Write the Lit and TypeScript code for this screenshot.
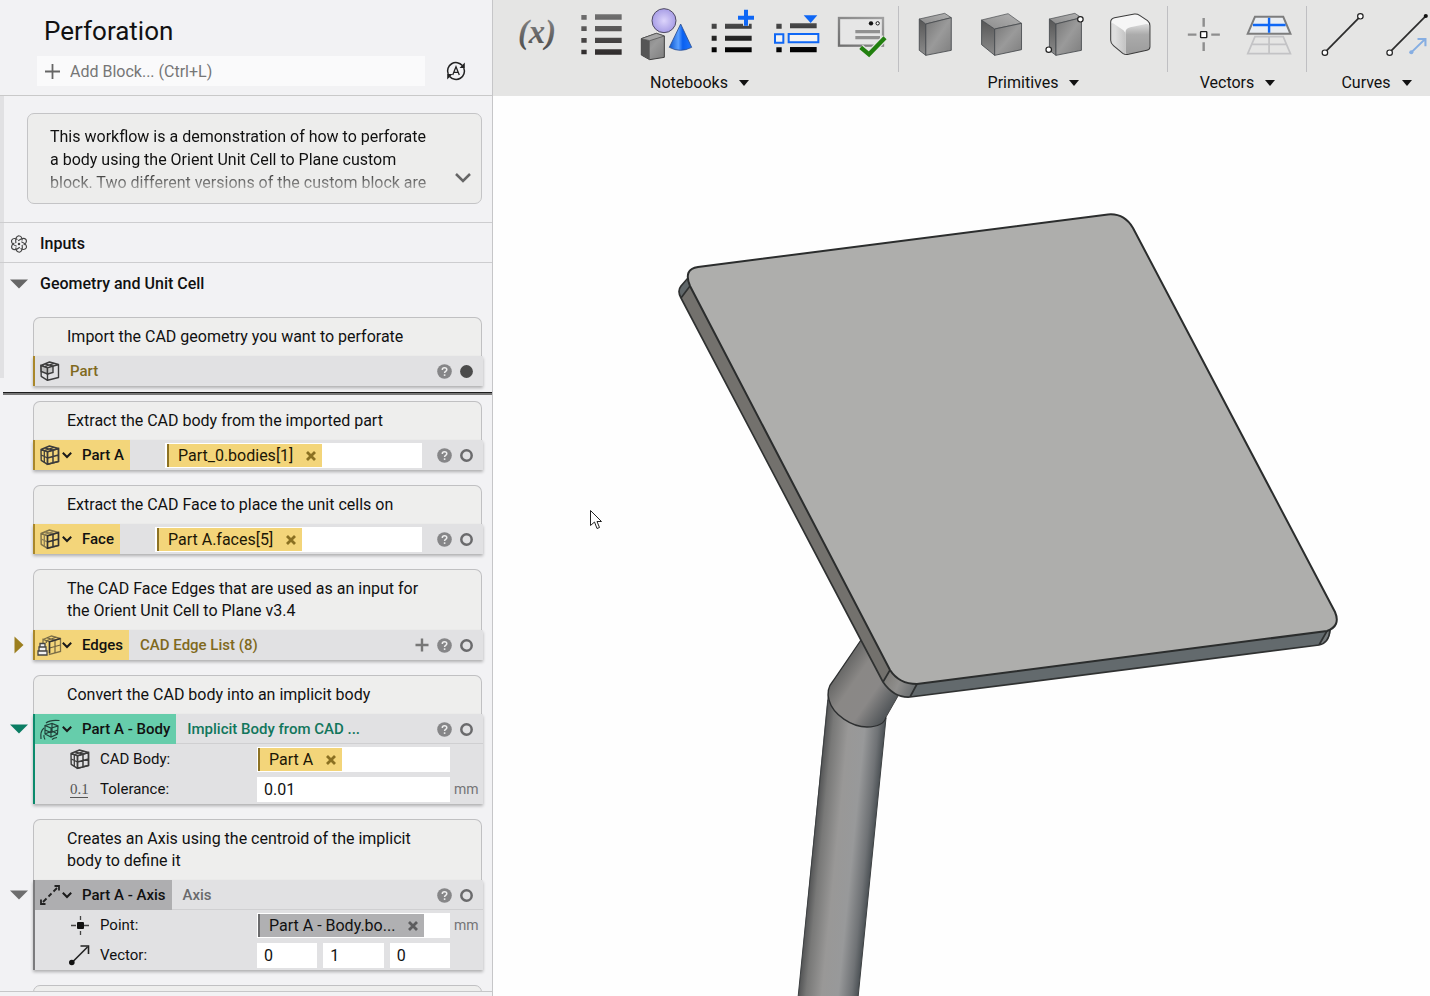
import { LitElement, html, svg, css, nothing } from "lit";
import { customElement } from "lit/decorators.js";

/* ---------- small icons for the block list ---------- */

const CUBE_OUTLINE = "M1 4.5 9.500 1 18.5 3.500 18.5 16.500 7.500 19.300 1.2 15.300ZM1 4.5 7.500 6.8 18.5 3.500M7.500 6.8V19.300";

const icon = (body: unknown, w = 20, h = 20, box = `0 0 ${w} ${h}`) =>
  html`<svg class="ico" width=${w} height=${h} viewBox=${box} aria-hidden="true">${body}</svg>`;

const partIcon = icon(svg`
  <path d=${CUBE_OUTLINE} fill="none" stroke="#3c3c3c" stroke-width="1.4" stroke-linejoin="round"/>
  <path d="M1 4.5 7.500 6.8V13L1.2 10.5Z" fill="#bdbdbd" stroke="#3c3c3c" stroke-width="1.4"/>
  <path d="M7.500 6.8 13 5.200V11.500L7.500 13Z" fill="#c9c9c9" stroke="#3c3c3c" stroke-width="1.4"/>
  <path d="M5 2.800 13 5.200M4.500 5.700 14 2.3" stroke="#3c3c3c" stroke-width="1.3" fill="none"/>`);

const meshIcon = (line: string, inner: string, front: string) => icon(svg`
  <path d=${CUBE_OUTLINE} fill="none" stroke=${line} stroke-width="1.4" stroke-linejoin="round"/>
  <path d="M1.2 10 7.500 13M4.3 5.700V17.300M5 2.800 13 5.200M4.3 5.700 14 2.3" fill="none" stroke=${inner} stroke-width="1.3"/>
  <path d="M7.500 6.8 18.5 3.500V16.500L7.500 19.300ZM13 5.200V17.900M7.500 13 18.5 10" fill="none" stroke=${front} stroke-width="1.5"/>`);

const bodyIcon = meshIcon("#3c3c3c", "#3c3c3c", "#3c3c3c");
const faceIcon = meshIcon("#7d7048", "#8b7d55", "#333");

const edgesIcon = icon(svg`
  <g transform="translate(2 0)">
    <path d="M1 4.5 9.500 1 18.5 3.500V16.500L7.500 19.300V6.8L1 4.5V8M7.500 6.8 18.5 3.500" fill="none" stroke="#7d7048" stroke-width="1.3"/>
    <path d="M13 5.200V17.900M7.500 13 18.5 10M5 2.800 13 5.200M4.3 5.700 14 2.3M4.3 5.700V8" fill="none" stroke="#6d6140" stroke-width="1.2"/>
    <path d="M7.500 18V6.8L18.5 3.500" fill="none" stroke="#333" stroke-width="1.5"/>
  </g>
  <path d="M0 8.5H5V12H0ZM-1 12H6V15.8H-1ZM-2 16H7V20H-2Z" fill="#f0f0f0" stroke="#444" stroke-width="1.3"/>`);

const implicitIcon = icon(svg`
  <path d="M5 6.5 12 4.5 18 7 17.5 15 11 18 5 15ZM5 6.5 11 9 18 7M11 9V18M5 11 11 13.5 17.8 11M5 15 12 12 17.5 15M12 4.5V12"
    fill="none" stroke="#22413a" stroke-width="1.2"/>
  <path d="M6 4Q10 .5 19.5 1.5M1 20Q0 12 4 9M5 20.5Q3.5 18 4 16M12 20.5Q13.5 19 17 18.5" fill="none" stroke="#22413a" stroke-width="1.2"/>`);

const axisIcon = icon(svg`
  <path d="M3 17 6.500 13.500M8.500 11.500 11.500 8.500M13.500 6.500 17 3" stroke="#222" stroke-width="1.800" fill="none"/>
  <path d="M1 14.500V19H5.500M14.500 1H19V5.500" fill="none" stroke="#222" stroke-width="1.800"/>`);

const pointIcon = icon(svg`
  <path d="M1 10.500H6M14 10.500H19M10.500 1V5M10.500 16V20" stroke="#444" stroke-width="1.3"/>
  <rect x="7" y="7" width="7" height="7" rx="1" fill="#111"/>`);

const vectorIcon = icon(svg`
  <path d="M1.500 18 17.500 2" stroke="#222" stroke-width="1.6"/>
  <path d="M10.500 1H18.500V9" fill="none" stroke="#222" stroke-width="1.6"/>
  <circle cx="1.800" cy="17.500" r="2.800" fill="#111"/>`);

const numberIcon = html`<span class="num-ico" aria-hidden="true">0.1</span>`;

const chevron = (w: number, color: string, sw: number) => html`
  <svg width=${w} height=${w} viewBox="0 0 10 10" aria-hidden="true">
    <path d="M.8 2.800 5 7 9.200 2.800" fill="none" stroke=${color} stroke-width=${sw}/>
  </svg>`;

const triDown = (color: string) => html`
  <svg width="18" height="10" viewBox="0 0 18 10" aria-hidden="true"><path d="M0 .5H18L9 9.500Z" fill=${color}/></svg>`;
const triRight = (color: string) => html`
  <svg width="18" height="18" viewBox="0 0 18 18" aria-hidden="true"><path d="M4.500 .5V17.500L13.500 9Z" fill=${color}/></svg>`;

/* ---------- block data ---------- */

type Tone = "gold" | "teal" | "grey";
interface Param {
  icon: unknown;
  label: string;
  chip?: { text: string; tone: Tone };
  values?: string[];
  unit?: string;
}
interface Block {
  comment: string;
  tone: Tone;
  icon: unknown;
  tag?: string;
  type?: string;
  chip?: string;
  addable?: boolean;
  visible?: boolean;
  toggle?: "open" | "closed";
  marker?: boolean;
  params?: Param[];
}

const BLOCKS: Block[] = [
  { comment: "Import the CAD geometry you want to perforate", tone: "gold", icon: partIcon, type: "Part", visible: true, marker: true },
  { comment: "Extract the CAD body from the imported part", tone: "gold", icon: bodyIcon, tag: "Part A", chip: "Part_0.bodies[1]" },
  { comment: "Extract the CAD Face to place the unit cells on", tone: "gold", icon: faceIcon, tag: "Face", chip: "Part A.faces[5]" },
  {
    comment: "The CAD Face Edges that are used as an input for the Orient Unit Cell to Plane v3.4",
    tone: "gold", icon: edgesIcon, tag: "Edges", type: "CAD Edge List (8)", addable: true, toggle: "closed",
  },
  {
    comment: "Convert the CAD body into an implicit body",
    tone: "teal", icon: implicitIcon, tag: "Part A - Body", type: "Implicit Body from CAD ...", toggle: "open",
    params: [
      { icon: bodyIcon, label: "CAD Body:", chip: { text: "Part A", tone: "gold" } },
      { icon: numberIcon, label: "Tolerance:", values: ["0.01"], unit: "mm" },
    ],
  },
  {
    comment: "Creates an Axis using the centroid of the implicit body to define it",
    tone: "grey", icon: axisIcon, tag: "Part A - Axis", type: "Axis", toggle: "open",
    params: [
      { icon: pointIcon, label: "Point:", chip: { text: "Part A - Body.bo...", tone: "grey" }, unit: "mm" },
      { icon: vectorIcon, label: "Vector:", values: ["0", "1", "0"] },
    ],
  },
];

const TOGGLE_COLOR: Record<Tone, string> = { gold: "#9c7f1f", teal: "#0b7d63", grey: "#6e6e6e" };

@customElement("block-card")
class BlockCard extends LitElement {
  static properties = { block: { attribute: false } };
  declare block: Block;

  static styles = css`
    :host { display: grid; grid-template-columns: 33px 1fr; padding-right: 9px; }
    * { box-sizing: border-box; }
    button { border: 0; background: none; padding: 0; margin: 0; font: inherit; color: inherit; display: flex; align-items: center; }
    svg { display: block; flex: none; }
    .comment {
      grid-column: 2; margin: 0 1px 0 0; padding: 8px 48px 8px 33px; line-height: 22px;
      background: #eeeeed; border: 1px solid #c0c0c2; border-bottom: 0; border-radius: 7px 7px 0 0;
    }
    .toggle { grid-column: 1; grid-row: 2; height: 30px; width: 28px; padding-left: 10px; }
    .block { grid-column: 2; grid-row: 2; background: #e1e1e3; border-left: 2px solid; box-shadow: 0 2px 3px rgba(0, 0, 0, 0.28); }
    .block.gold { border-color: #a9872a; }
    .block.teal { border-color: #0b8a6c; }
    .block.grey { border-color: #7b7b7d; }
    .head { display: flex; align-items: center; height: 30px; }
    .tag { height: 30px; padding: 0 6px 0 5px; font-size: 15px; font-weight: 500; gap: 10px; }
    .tag .pair { display: flex; align-items: center; gap: 2px; width: 32px; }
    .ico { overflow: visible; }
    .gold .tag { background: #f3d57a; }
    .teal .tag { background: #66cdab; }
    .grey .tag { background: #aeaeb0; }
    .plain { display: flex; align-items: center; gap: 10px; padding-left: 5px; }
    .type { font-size: 15px; font-weight: 500; }
    .tag + .type { padding-left: 11px; }
    .gold .type { color: #80691d; }
    .teal .type { color: #12765c; }
    .grey .type { color: #6a6a6c; }
    .tools { margin-left: auto; display: flex; align-items: center; gap: 8px; padding-right: 10px; }
    .slot { flex: 1; margin: 0 15px 0 35px; padding-left: 2px; }
    .slot, .field { display: flex; align-items: center; height: 25px; background: #fff; min-width: 0; }
    .field { padding-left: 1px; }
    .slot input, .field input { flex: 1; width: 0; min-width: 0; height: 100%; }
    input { border: 0; outline: 0; background: #fff; font: inherit; color: #111; padding: 0 7px; margin: 0; border-radius: 0; }
    .chip { display: flex; align-items: center; gap: 13px; height: 23px; padding: 1px 6px 0 9px; border-left: 2px solid; white-space: nowrap; }
    .chip.gold { background: #f3d57a; border-color: #8d7223; color: #1c1705; }
    .chip.grey { background: #b0b0b2; border-color: #6b6b6d; }
    .param { display: grid; grid-template-columns: 30px 1fr 193px 33px; align-items: center; height: 30px; padding-left: 35px; }
    .param label { font-size: 15px; }
    .values { display: flex; gap: 6px; }
    .values input { flex: 1; width: 0; min-width: 0; height: 25px; }
    .unit { color: #747476; padding-left: 4px; font-size: 14px; }
    .num-ico { display: block; width: 18px; height: 17px; font: 15px/16px "Liberation Serif", serif; color: #555; border-bottom: 1px solid #555; }
    .rule { height: 1px; background: #cfcfd1; margin-top: -1px; }
  `;

  private cross(tone: Tone) {
    return html`<button aria-label="Remove">
      <svg width="10" height="10" viewBox="0 0 10 10"><path d="M1 1 9 9M9 1 1 9" stroke=${tone === "grey" ? "#5c5c5e" : "#8a7022"} stroke-width="2.800"/></svg>
    </button>`;
  }

  private param(p: Param, i: number) {
    const id = `p${i}`;
    return html`<div class="param">
      ${p.icon}<label for=${id}>${p.label}</label>
      ${p.chip
        ? html`<div class="field"><span class="chip ${p.chip.tone}">${p.chip.text}${this.cross(p.chip.tone)}</span><input id=${id} /></div>`
        : html`<div class="values">${p.values!.map((v, k) => html`<input id=${k ? `${id}-${k}` : id} aria-label=${p.label} .value=${v} />`)}</div>`}
      <span class="unit">${p.unit ?? nothing}</span>
    </div>`;
  }

  render() {
    const b = this.block;
    return html`
      <p class="comment">${b.comment}</p>
      ${b.toggle
        ? html`<button class="toggle" aria-label="Toggle block">${b.toggle === "open" ? triDown(TOGGLE_COLOR[b.tone]) : triRight(TOGGLE_COLOR[b.tone])}</button>`
        : nothing}
      <div class="block ${b.tone}">
        <div class="head">
          ${b.tag
            ? html`<button class="tag"><span class="pair">${b.icon}${chevron(10, "#1a1a1a", 2)}</span>${b.tag}</button>
                ${b.type ? html`<span class="type">${b.type}</span>` : nothing}`
            : html`<span class="plain">${b.icon}<span class="type">${b.type}</span></span>`}
          ${b.chip
            ? html`<div class="slot"><span class="chip gold">${b.chip}${this.cross("gold")}</span><input aria-label=${`${b.tag} value`} /></div>`
            : nothing}
          <div class="tools">
            ${b.addable
              ? html`<button aria-label="Add"><svg width="14" height="14" viewBox="0 0 14 14"><path d="M7 .5V13.500M.5 7H13.500" stroke="#777" stroke-width="2.400"/></svg></button>`
              : nothing}
            <button aria-label="Help"><svg width="15" height="15" viewBox="0 0 15 15">
              <circle cx="7.500" cy="7.500" r="7.300" fill="#868688"/>
              <path d="M5.300 5.900Q5.300 3.800 7.500 3.800 9.800 3.800 9.800 5.700 9.800 6.700 8.600 7.400 7.600 8 7.600 9.100" fill="none" stroke="#eee" stroke-width="1.500"/>
              <rect x="6.800" y="10.300" width="1.600" height="1.600" fill="#eee"/></svg></button>
            <button aria-label="Visibility"><svg width="13" height="13" viewBox="0 0 13 13">
              ${b.visible
                ? svg`<circle cx="6.500" cy="6.500" r="6.400" fill="#4b4b4b"/>`
                : svg`<circle cx="6.500" cy="6.500" r="5.200" fill="none" stroke="#6a6a6c" stroke-width="2.500"/>`}</svg></button>
          </div>
        </div>
        ${b.params ? html`<div class="rule"></div>${b.params.map((p, i) => this.param(p, i))}` : nothing}
      </div>`;
  }
}

/* ---------- ribbon ---------- */

interface Tool { name: string; art: unknown }
interface Group { name: string; box: (i: number) => string; tools: Tool[] }

const gradients = svg`<defs>
  <linearGradient id="bars" gradientUnits="userSpaceOnUse" x1="0" y1="40" x2="0" y2="165"><stop offset="0" stop-color="#727272"/><stop offset="1" stop-color="#2e2a2a"/></linearGradient>
  <linearGradient id="dark" gradientUnits="userSpaceOnUse" x1="0" y1="65" x2="0" y2="155"><stop offset="0" stop-color="#505050"/><stop offset="1" stop-color="#000"/></linearGradient>
  <linearGradient id="fx" x1="0" y1="0" x2="0" y2="1"><stop offset="0" stop-color="#8a8a8a"/><stop offset="1" stop-color="#4a4a4a"/></linearGradient>
  <radialGradient id="ball"><stop offset="0" stop-color="#dcd4fb"/><stop offset="1" stop-color="#a89ee6"/></radialGradient>
  <linearGradient id="cone" x1="0" x2="1"><stop offset="0" stop-color="#0a55d0"/><stop offset=".4" stop-color="#5aa0ff"/><stop offset=".6" stop-color="#0a60f0"/><stop offset="1" stop-color="#1f77ff"/></linearGradient>
  <linearGradient id="face" x1="0" y1="0" x2="1" y2="1"><stop offset="0" stop-color="#767676"/><stop offset=".5" stop-color="#9a9a9a"/><stop offset="1" stop-color="#7e7e7e"/></linearGradient>
  <linearGradient id="side" x1="0" y1="0" x2="0" y2="1"><stop offset="0" stop-color="#565656"/><stop offset="1" stop-color="#8c8c8c"/></linearGradient>
  <linearGradient id="top" x1="0" y1="1" x2="1" y2="0"><stop offset="0" stop-color="#8c8c8c"/><stop offset="1" stop-color="#b2b2b2"/></linearGradient>
  <linearGradient id="soft" x1="0" y1="0" x2="0" y2="1"><stop offset="0" stop-color="#dcdcdc"/><stop offset=".35" stop-color="#ababab"/><stop offset="1" stop-color="#9c9c9c"/></linearGradient>
  <linearGradient id="softside" x1="0" y1="0" x2="1" y2="0"><stop offset=".3" stop-color="#dedede"/><stop offset="1" stop-color="#c4c4c4"/></linearGradient>
  <linearGradient id="panel" x1="0" y1="1" x2="1" y2="0"><stop offset="0" stop-color="#707070"/><stop offset="1" stop-color="#a0a0a0"/></linearGradient>
</defs>`;

const box3d = (x: number) => svg`<g transform="translate(${x} 0)" stroke="#45484c" stroke-width="2.500" stroke-linejoin="round">
  <path d="M85 57 104 72V166L85 151Z" fill="url(#side)"/>
  <path d="M85 57 159 40 178 53 104 72Z" fill="url(#top)" stroke-width="2"/>
  <path d="M104 72 178 53V151L104 166Z" fill="url(#face)"/></g>`;

const knob = (x: number, y: number) => svg`<circle cx=${x} cy=${y} r="8" fill="#fff" stroke="#222" stroke-width="3.500"/>`;

const ROUNDED = "M652 53 710 42Q718 41 725 46L748 62Q755 68 755 77V140Q755 149 746 151L693 163Q683 165 676 160L649 137Q641 131 641 121V66Q641 56 652 53Z";

const GROUPS: Group[] = [
  {
    name: "Notebooks",
    box: (i) => `${33 + 195 * i} 24 195 162`,
    tools: [
      { name: "Variable", art: svg`<text x="132" y="130" text-anchor="middle" font-family="Liberation Serif, serif" font-style="italic" font-weight="700" font-size="98" fill="url(#fx)">(x)</text>` },
      { name: "List", art: svg`<g fill="url(#bars)">
          <path d="M265 45h16v14h-16zM265 79h16v14h-16zM265 114h16v14h-16zM265 149h16v14h-16zM306 43h80v16h-80zM306 78h80v16h-80zM306 113h80v16h-80zM306 148h80v16h-80z"/></g>` },
      { name: "Custom block", art: svg`
          <path d="M445 116 490 100 514 108 514 172 470 179 445 165Z" fill="url(#face)" stroke="#3e3e3e" stroke-width="3" stroke-linejoin="round"/>
          <path d="M445 116 470 122 470 179 445 165Z" fill="#555"/><path d="M445 116 490 100 514 108 470 122Z" fill="#a6a6a6" stroke="#4a4a4a" stroke-width="2"/>
          <circle cx="513" cy="62" r="36" fill="url(#ball)" stroke="#4e4a62" stroke-width="3"/>
          <path d="M563 72 529 142Q562 160 596 142Z" fill="url(#cone)" stroke="#2c4f92" stroke-width="2.500"/>` },
      { name: "Add to list", art: svg`<path d="M656 71h15v15h-15zM656 107h15v15h-15zM656 142h15v15h-15zM696 71h80v15h-80zM696 107h80v15h-80zM696 142h80v15h-80z" fill="url(#dark)"/>
          <path d="M759 29V77M735 53H783" stroke="#e5e5e4" stroke-width="18"/><path d="M759 29V77M735 53H783" stroke="#0f67f5" stroke-width="12"/>` },
      { name: "Insert row", art: svg`<path d="M850 71h16v15h-16zM850 142h16v15h-16zM891 70h80v15h-80zM891 141h80v16h-80z" fill="url(#dark)"/>
          <path d="M932 46H973L953 69Z" fill="#0f67f5"/><path d="M846 103h25v25h-25zM887 102h89v25h-89z" fill="#f3f3f3" stroke="#0f67f5" stroke-width="6"/>` },
      { name: "Check notebook", art: svg`<rect x="1038" y="54" width="132" height="83" fill="#e6e6e6" stroke="url(#panel)" stroke-width="7"/>
          <path d="M1087 95h74M1087 113h74" stroke="#919191" stroke-width="10"/>
          <circle cx="1134" cy="70" r="6.500" fill="#111"/><circle cx="1154" cy="70" r="5" fill="#fff" stroke="#111" stroke-width="3"/>
          <path d="M1103 142 1128 163 1176 113" fill="none" stroke="#e5e5e4" stroke-width="20"/><path d="M1103 142 1128 163 1176 113" fill="none" stroke="#22800f" stroke-width="13"/>` },
    ],
  },
  {
    name: "Primitives",
    box: (i) => `${37.75 + 188.8 * i} 24 188.8 162`,
    tools: [
      { name: "Box", art: box3d(0) },
      { name: "Cube", art: svg`<g stroke="#45484c" stroke-width="2.500" stroke-linejoin="round">
          <path d="M266 60 304 87V166L266 134Z" fill="url(#side)"/><path d="M266 60 343 41 382 70 304 87Z" fill="url(#top)" stroke-width="2"/><path d="M304 87 382 70V149L304 166Z" fill="url(#face)"/></g>` },
      { name: "Box from corners", art: svg`${box3d(378)}${knob(553, 58)}${knob(461, 149)}` },
      { name: "Rounded box", art: svg`<path d=${ROUNDED} fill="#f6f6f6"/>
          <path d="M684 98Q684 85 698 82L744 72Q754 71 754 80V140Q754 149 746 151L693 163Q684 164 684 156Z" fill="url(#soft)"/>
          <path d="M642 72Q643 66 650 71L678 91Q684 96 684 104V161Q680 162 676 160L649 137Q642 131 642 121Z" fill="url(#softside)"/>
          <path d=${ROUNDED} fill="none" stroke="#3b3b3b" stroke-width="3"/>` },
    ],
  },
  {
    name: "Vectors",
    box: (i) => `${819 + 188.8 * i} 24 188.8 162`,
    tools: [
      { name: "Point", art: svg`<path d="M911 54V80M911 127V153M865 104H890M933 104H958" stroke="#8e8e8e" stroke-width="7"/><rect x="902" y="95" width="18" height="18" rx="2" fill="#fff" stroke="#1c1c1c" stroke-width="4"/>` },
      { name: "Plane", art: svg`<path d="M1060 110H1142L1163 161H1039ZM1050 133H1152M1101 110V161" fill="none" stroke="#c3c3c5" stroke-width="5"/>
          <path d="M1060 50H1142L1163 101H1039Z" fill="#e9edf2" stroke="#7d7d7d" stroke-width="6"/><path d="M1054 75H1149M1101 53V98" stroke="#0f67f5" stroke-width="7"/>` },
    ],
  },
  {
    name: "Curves",
    box: (i) => `${1222.6 + 188.8 * i} 24 188.8 162`,
    tools: [
      { name: "Line", art: svg`<path d="M1263 157 1366 49" stroke="#2c2c2c" stroke-width="5"/>${knob(1263, 158)}${knob(1366, 49)}` },
      { name: "Line from vector", art: svg`<path d="M1451 157 1555 49" stroke="#2c2c2c" stroke-width="5"/>${knob(1451, 158)}<circle cx="1556" cy="48" r="6" fill="#111"/>
          <path d="M1514 157 1553 118M1532 117H1555V139" fill="none" stroke="#86aee2" stroke-width="6"/><circle cx="1514" cy="157" r="6" fill="#86aee2"/>` },
    ],
  },
];

@customElement("tool-ribbon")
class ToolRibbon extends LitElement {
  static styles = css`
    :host { display: flex; height: 96px; padding: 6px 0 0 7px; background: #e5e5e4; overflow: hidden; box-sizing: border-box; }
    button { border: 0; background: none; padding: 0; margin: 0; font: inherit; color: inherit; display: block; }
    .group { flex: none; display: flex; flex-direction: column; align-items: stretch; }
    .tools { display: flex; align-items: flex-start; height: 66px; padding: 2px 4px 0; border-right: 1px solid #bfbfc2; box-sizing: border-box; }
    .group:last-child .tools { border-color: transparent; }
    svg { display: block; }
    .name { display: flex; align-items: center; justify-content: center; gap: 11px; height: 22px; }
  `;
  render() {
    return GROUPS.map((g) => html`<div class="group">
      <div class="tools">${g.tools.map((t, i) => html`<button aria-label=${t.name}>
        <svg width="65" height="54" preserveAspectRatio="none" viewBox=${g.box(i)}>${gradients}${t.art}</svg></button>`)}</div>
      <button class="name">${g.name}<svg width="10" height="6" viewBox="0 0 10 6"><path d="M0 0H10L5 6Z" fill="#111"/></svg></button>
    </div>`);
  }
}

/* ---------- 3D view ---------- */

@customElement("model-view")
class ModelView extends LitElement {
  static styles = css`
    :host { display: block; min-height: 0; background: #fefefe; overflow: hidden; }
    svg { display: block; width: 100%; height: 100%; }
  `;
  render() {
    return html`<svg viewBox="493 96 937 900" role="img" aria-label="Plate on a bent stem">
      <defs>
        <linearGradient id="stem" gradientUnits="userSpaceOnUse" x1="827" y1="712" x2="887" y2="718">
          <stop offset="0" stop-color="#555657"/><stop offset=".12" stop-color="#787877"/><stop offset=".38" stop-color="#999897"/>
          <stop offset=".65" stop-color="#98999a"/><stop offset=".87" stop-color="#6f7275"/><stop offset="1" stop-color="#464c50"/></linearGradient>
        <linearGradient id="elbow" gradientUnits="userSpaceOnUse" x1="838" y1="672" x2="890" y2="708">
          <stop offset="0" stop-color="#666665"/><stop offset=".3" stop-color="#8a8886"/><stop offset=".65" stop-color="#8a8887"/><stop offset="1" stop-color="#54585b"/></linearGradient>
        <linearGradient id="rim" gradientUnits="userSpaceOnUse" x1="884" y1="676" x2="914" y2="690">
          <stop offset="0" stop-color="#7c7a76"/><stop offset=".5" stop-color="#908f8d"/><stop offset="1" stop-color="#6a6e70"/></linearGradient>
      </defs>
      <path d="M828 692 886 700V718L858 998H798Z" fill="url(#stem)"/>
      <path d="M828 700 798 998M886 718 858 998" stroke="#3d4042" fill="none"/>
      <path d="M861 640 833 681Q826 689 829 700C833 715 852 727 867 727 878 727 885 723 886 717L898 696 890 660Z" fill="url(#elbow)"/>
      <path d="M861 640 833 681Q826 689 829 700C833 715 852 727 867 727 878 727 885 723 886 717" fill="none" stroke="#2d2f30" stroke-width="1.300"/>
      <path d="M886 717 898 696" stroke="#444" fill="none"/>
      <path d="M688 279 681 286Q677 291 681 298L690 286Z" fill="#60676a"/>
      <path d="M681 298 690 286 890 670 883 682Z" fill="#73716d"/>
      <path d="M883 682 890 670Q901 684 917 684L910 697Q894 698 883 682Z" fill="url(#rim)"/>
      <path d="M910 697 917 684 1327 631 1319 645Z" fill="#636a6d"/>
      <path d="M1319 645 1327 631 1331 629Q1330 642 1319 645Z" fill="#777c7e"/>
      <path d="M688 278 681 286Q677 291 681 298L883 682Q894 698 910 697L1319 645Q1329 643 1330 630M681 298 690 286M883 682 890 670M910 697 917 684M1319 645 1327 631"
        fill="none" stroke="#2f3131" stroke-width="1.700"/>
      <path d="M698 267 1108 214.500Q1124 213 1133 228L1335 612Q1341 626 1327 631L917 684Q899 684 890 670L690 286Q683 269 698 267Z"
        fill="#aeaeac" stroke="#2b2d2d" stroke-width="2"/>
      <path d="M590.500 510.500V525.500L594.500 522 597 528.500 599.500 527.500 597 521.500H601.500Z" fill="#fff" stroke="#222"/>
    </svg>`;
  }
}

/* ---------- application shell ---------- */

@customElement("app-root")
class AppRoot extends LitElement {
  static styles = css`
    :host {
      display: grid; grid-template-columns: 493px minmax(0, 1fr); height: 100vh; overflow: hidden;
      font: 16px/22px Roboto, sans-serif; color: #111;
    }
    * { box-sizing: border-box; }
    button { border: 0; background: none; padding: 0; margin: 0; font: inherit; color: inherit; display: flex; align-items: center; }
    svg { display: block; flex: none; }
    .side { display: flex; flex-direction: column; min-height: 0; background: #f2f2f4; border-right: 1px solid #c6c6c8; }
    .main { display: grid; grid-template-rows: auto minmax(0, 1fr); min-width: 0; }
    header { height: 96px; padding: 16px 16px 0 37px; border-bottom: 1px solid #c9c9c9; }
    h1 { margin: 0; padding-left: 7px; font-size: 26px; line-height: 30px; font-weight: 400; }
    .bar { display: flex; align-items: center; margin-top: 10px; }
    .search { flex: 1; display: flex; align-items: center; gap: 10px; height: 30px; padding: 1px 0 0 8px; background: #fafafb; }
    .search input { flex: 1; min-width: 0; border: 0; outline: 0; background: none; font: inherit; padding: 0; }
    .search input::placeholder { color: #767676; opacity: 1; }
    .refresh { margin: 0 10px 0 21px; }
    .list { position: relative; isolation: isolate; flex: 1; min-height: 0; overflow: hidden; }
    .thumb { position: absolute; z-index: -1; left: 0; top: 0; width: 4px; height: 282px; background: #e1e1e3; }
    .about {
      display: flex; margin: 17px 10px 18px 27px; height: 91px; padding: 11px 0 0 22px;
      background: #ededec; border: 1px solid #c4c4c6; border-radius: 7px;
    }
    .about p {
      flex: 1; margin: 0; height: 69px; line-height: 23px;
      mask-image: linear-gradient(#000 44px, rgba(0, 0, 0, 0.25) 66px);
    }
    .about button { width: 46px; padding: 48px 0 0 20px; align-items: flex-start; }
    .section { display: flex; align-items: center; height: 40px; gap: 12px; padding: 2px 0 0 10px; border-top: 1px solid #cdcdcf; }
    h2 { margin: 0; font-size: 16px; line-height: 22px; font-weight: 500; }
    .cards { display: flex; flex-direction: column; gap: 15px; padding-top: 15px; }
    .cards hr { margin: -9px 0 -9px 3px; height: 3px; border: 0; border-top: 1px solid #1d1d1d; background: #777; }
    .next { flex: none; margin: 0 10px 0 33px; height: 30px; border: 1px solid #c0c0c2; border-radius: 7px; background: #eeeeed; }
    footer { height: 5px; border-top: 1px solid #c6c6c8; }
  `;

  render() {
    return html`
      <aside class="side">
        <header>
          <h1>Perforation</h1>
          <div class="bar">
            <label class="search">
              <svg width="15" height="15" viewBox="0 0 15 15" aria-hidden="true"><path d="M7.500 0V15M0 7.500H15" stroke="#666" stroke-width="1.800"/></svg>
              <input aria-label="Add Block" placeholder="Add Block... (Ctrl+L)" />
            </label>
            <button class="refresh" aria-label="Automatic rebuild">
              <svg width="20" height="20" viewBox="0 0 20 20" fill="none" stroke="#222" stroke-width="1.500">
                <path d="M2.200 13A8.300 8.300 0 0 1 16.300 4.600M17.800 7A8.300 8.300 0 0 1 3.700 15.400"/>
                <path d="M18.800 1.500V7H13.500ZM1.200 18.500V13H6.500Z" fill="#222" stroke="none"/>
                <path d="M6.700 14 10 5.800 13.300 14M7.800 11.300H12.200" stroke-width="1.300"/>
              </svg>
            </button>
          </div>
        </header>
        <div class="list">
          <section class="about">
            <p>This workflow is a demonstration of how to perforate a body using the Orient Unit Cell to Plane custom block. Two different versions of the custom block are</p>
            <button aria-label="Expand description">
              <svg width="16" height="10" viewBox="0 0 16 10"><path d="M1 1 8 8 15 1" fill="none" stroke="#666" stroke-width="2.500"/></svg>
            </button>
          </section>
          <div class="section">
            <svg width="18" height="20" viewBox="-10 -10 20 20" fill="none" stroke="#444" stroke-width="1.300" aria-hidden="true">
              ${[0, 60, 120, 180, 240, 300].map((a) => svg`<path transform="rotate(${a})" d="M-3.500 -1Q-4.500 -8 -.5 -9.200 3.500 -9 3.500 -4"/>`)}
              <circle r="1.400" fill="#444" stroke="none"/>
            </svg>
            <h2>Inputs</h2>
          </div>
          <div class="section">
            ${triDown("#666")}
            <h2>Geometry and Unit Cell</h2>
          </div>
          <div class="cards">
            ${BLOCKS.map((b) => html`<block-card .block=${b}></block-card>${b.marker ? html`<hr />` : nothing}`)}
            <div class="next"></div>
          </div>
          <div class="thumb"></div>
        </div>
        <footer></footer>
      </aside>
      <main class="main">
        <tool-ribbon></tool-ribbon>
        <model-view></model-view>
      </main>`;
  }
}
